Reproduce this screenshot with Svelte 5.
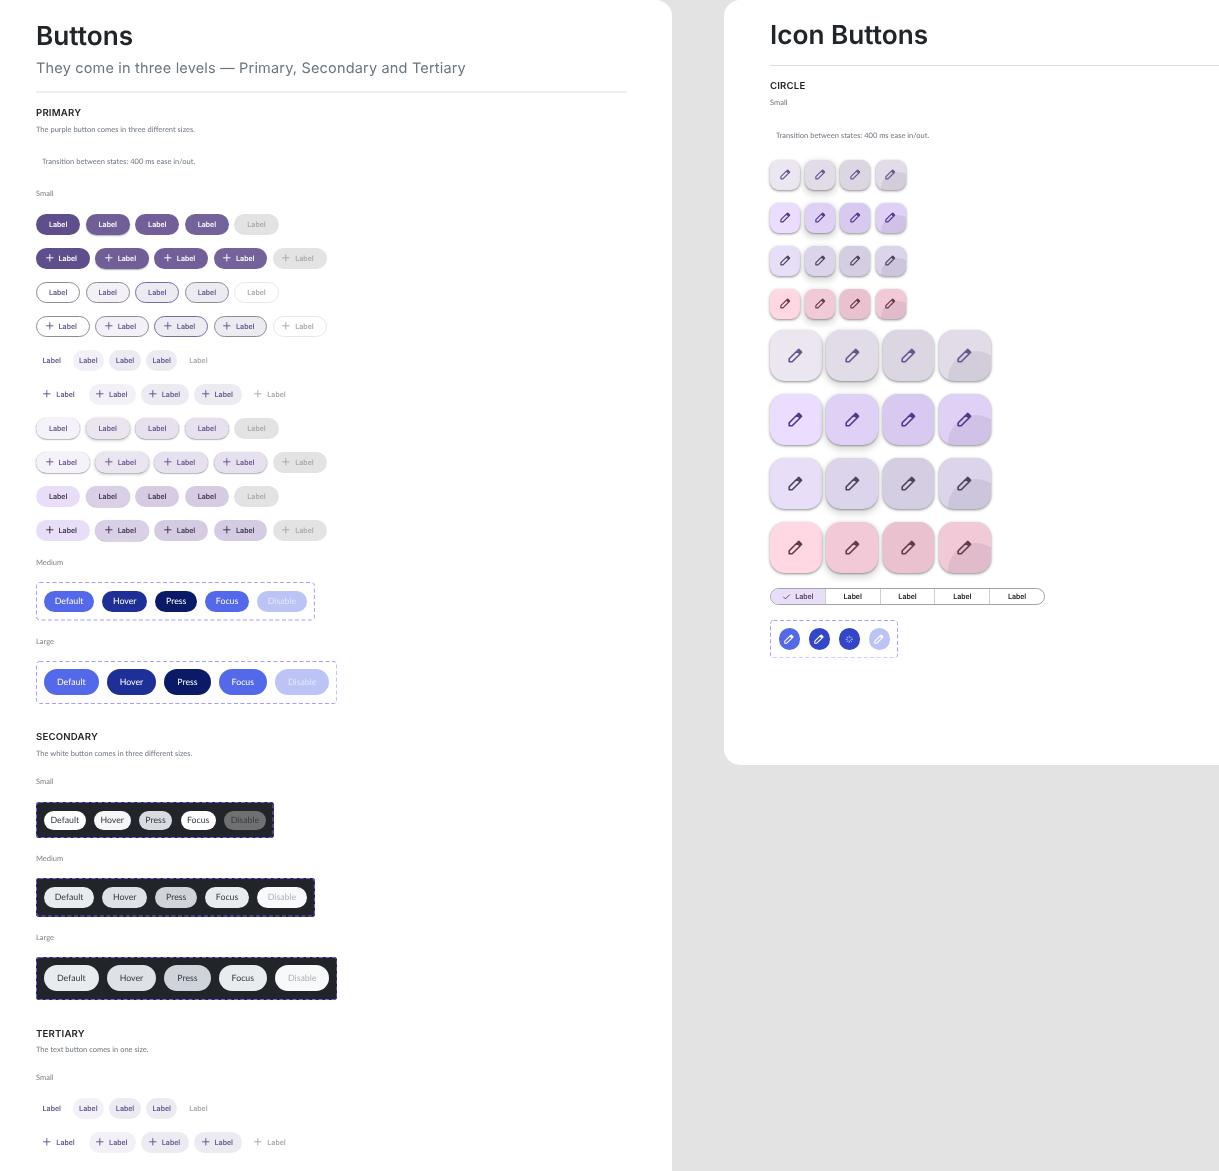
<script>
	const states = ['Default', 'Hover', 'Press', 'Focus', 'Disable'];
	const stateClass = ['default', 'hover', 'press', 'focus', 'disable'];
	const variants = ['filled', 'outlined', 'text', 'elevated', 'tonal'];
	const iconRows = ['standard', 'primary', 'secondary', 'tertiary'];
	const spokes = [0, 45, 90, 135, 180, 225, 270, 315];
</script>

{#snippet pencil()}
	<svg class="pencil" viewBox="0 0 15 15" aria-hidden="true">
		<path class="body" d="M1.2 13.8v-3L9 3l3 3-7.8 7.8z" />
		<path class="tip" d="M8.8 2.2l1.1-1.2a1.2 1.2 0 0 1 1.7 0L14 3.4a1.2 1.2 0 0 1 0 1.7l-1.2 1.1z" />
	</svg>
{/snippet}

{#snippet dashes()}
	<svg class="dashes" aria-hidden="true"><rect x="0.5" y="0.5" rx="3" /></svg>
{/snippet}

{#snippet labelRow(variant, withIcon)}
	<div class="m3-row">
		{#each stateClass as state}
			<span class="m3 {variant} {state}" class:with-icon={withIcon}>
				{#if withIcon}
					<svg class="plus" viewBox="0 0 10 10" aria-hidden="true"><path d="M5 1.2v7.6M1.2 5h7.6" /></svg>
				{/if}
				Label
			</span>
		{/each}
	</div>
{/snippet}

{#snippet variantRows(variant)}
	{@render labelRow(variant, false)}
	{@render labelRow(variant, true)}
{/snippet}

{#snippet stateBox(kind, size)}
	<div class="state-box {kind} {size}">
		{#each states as name, i}
			<span class="pill {stateClass[i]}">{name}</span>
		{/each}
		{@render dashes()}
	</div>
{/snippet}

<div class="page">
	<section class="panel buttons">
		<h1>Buttons</h1>
		<p class="lead">They come in three levels — Primary, Secondary and Tertiary</p>
		<hr class="thick" />

		<h2 class="first">PRIMARY</h2>
		<p class="note">The purple button comes in three different sizes.</p>
		<p class="note transition">Transition between states: 400 ms ease in/out.</p>
		<p class="note size">Small</p>
		<div class="m3-rows">
			{#each variants as variant}
				{@render variantRows(variant)}
			{/each}
		</div>
		<p class="note size medium-label">Medium</p>
		{@render stateBox('blue', 'md')}
		<p class="note size after-box">Large</p>
		{@render stateBox('blue', 'lg')}

		<h2>SECONDARY</h2>
		<p class="note">The white button comes in three different sizes.</p>
		<p class="note size section-size">Small</p>
		{@render stateBox('dark', 'sm')}
		<p class="note size after-box">Medium</p>
		{@render stateBox('dark', 'md')}
		<p class="note size after-box">Large</p>
		{@render stateBox('dark', 'lg')}

		<h2 class="tertiary-title">TERTIARY</h2>
		<p class="note tertiary-note">The text button comes in one size.</p>
		<p class="note size section-size">Small</p>
		<div class="m3-rows">
			{@render variantRows('text')}
		</div>
	</section>

	<section class="panel icons">
		<h1>Icon Buttons</h1>
		<hr class="thin" />
		<h2 class="first">CIRCLE</h2>
		<p class="note">Small</p>
		<p class="note transition">Transition between states: 400 ms ease in/out.</p>

		<div class="icon-grid small">
			{#each iconRows as tone}
				<div class="icon-row">
					{#each stateClass.slice(0, 4) as state}
						<span class="icon-btn {tone} {state}">{@render pencil()}</span>
					{/each}
				</div>
			{/each}
		</div>

		<div class="icon-grid large">
			{#each iconRows as tone}
				<div class="icon-row">
					{#each stateClass.slice(0, 4) as state}
						<span class="icon-btn {tone} {state}">{@render pencil()}</span>
					{/each}
				</div>
			{/each}
		</div>

		<div class="segmented">
			<span class="segment selected">
				<svg viewBox="0 0 10 10" aria-hidden="true"><path d="M1.4 5.3l2.4 2.4 5-5" /></svg>
				Label
			</span>
			{#each [1, 2, 3, 4] as n (n)}
				<span class="segment">Label</span>
			{/each}
		</div>

		<div class="circle-box">
			<span class="circle default">{@render pencil()}</span>
			<span class="circle hover">{@render pencil()}</span>
			<span class="circle hover">
				<svg class="spinner" viewBox="0 0 24 24" aria-hidden="true">
					{#each spokes as angle}
						<path d="M12 5v4" transform="rotate({angle} 12 12)" />
					{/each}
				</svg>
			</span>
			<span class="circle disable">{@render pencil()}</span>
			{@render dashes()}
		</div>
	</section>
</div>

<style>
	:global(body) {
		background: #e3e3e3;
	}

	.page {
		display: flex;
		gap: 52px;
		height: 1171px;
		overflow: hidden;
		font-family: 'Lato', sans-serif;
		text-rendering: geometricPrecision;
		will-change: transform;
	}

	.panel {
		background: #fff;
		box-sizing: border-box;
	}

	.buttons {
		width: 672px;
		flex-shrink: 0;
		padding: 20px 45px 0 36px;
		border-top-right-radius: 16px;
	}

	.icons {
		flex: 1;
		height: 765px;
		padding: 19px 0 0 46px;
		border-radius: 16px 0 0 16px;
	}

	h1 {
		margin: 0;
		font: 600 26.2px/34px 'Inter', sans-serif;
		color: #212529;
	}

	.lead {
		margin: 4px 0 -1px;
		font: 400 14.5px/22px 'Inter', sans-serif;
		letter-spacing: 0.18px;
		color: #6c757d;
	}

	hr {
		border: 0;
		margin: 0;
	}

	hr.thick {
		height: 2px;
		margin-top: 12px;
		background: #eeeeee;
	}

	hr.thin {
		height: 1px;
		margin-top: 12px;
		background: #dedede;
	}

	h2 {
		margin: 27.5px 0 0;
		font: 600 9.6px/14px 'Inter', sans-serif;
		letter-spacing: 0.2px;
		color: #212529;
	}

	h2.first {
		margin-top: 14px;
	}

	h2.tertiary-title {
		margin-top: 28.5px;
	}

	.note {
		margin: 3px 0 0;
		font: 400 7.5px/12px 'Lato', sans-serif;
		color: #6c757d;
	}

	.tertiary-note {
		margin-top: 2px;
	}

	.transition {
		margin-top: 20px;
		padding-left: 6px;
	}

	.icons .transition {
		margin-top: 21px;
	}

	.size {
		margin-top: 20px;
		color: #7b8085;
	}

	.medium-label {
		margin-top: 16px;
	}

	.after-box {
		margin-top: 15px;
	}

	.section-size {
		margin-top: 16px;
	}

	/* Material style label buttons */
	.m3-rows {
		display: flex;
		flex-direction: column;
		gap: 12.5px;
		margin-top: 13.5px;
	}

	.m3-row {
		display: flex;
		gap: 5.3px;
	}

	.m3 {
		display: inline-flex;
		align-items: center;
		justify-content: center;
		box-sizing: border-box;
		height: 21.5px;
		padding: 0 12.9px;
		gap: 4.3px;
		border-radius: 11px;
		font: 500 7.5px/1 'Roboto', sans-serif;
		letter-spacing: 0.05px;
	}

	.m3.with-icon {
		padding: 0 12.9px 0 8.6px;
	}

	.plus {
		width: 9.6px;
		height: 9.6px;
		fill: none;
		stroke: currentColor;
		stroke-width: 1;
	}

	.filled { background: #65558f; color: #fff; }
	.filled.default { background: #5f4e8c; }
	.filled.hover { background: #6f5f96; box-shadow: 0 1px 1.5px rgba(0, 0, 0, 0.3); }
	.filled.press { background: #725f99; }
	.filled.focus { background: #74639a; }

	.m3.outlined { border: 1px solid #8f8b95; color: #65558f; background: #fff; padding: 0 11.9px; }
	.m3.outlined.with-icon { padding: 0 11.9px 0 7.6px; }
	.outlined.hover { background: #f3f1f7; }
	.outlined.press { background: #ecebf2; border-color: #7a6ba3; }
	.outlined.focus { background: #ecebf2; }

	.m3.text { color: #65558f; padding: 0 6.45px; }
	.m3.text.with-icon { padding: 0 8.6px 0 6.45px; }
	.text.hover { background: #f3f1f7; }
	.text.press { background: #ecebf2; }
	.text.focus { background: #ecebf2; }

	.elevated { background: #f6f2fa; color: #65558f; box-shadow: 0 0.5px 1px rgba(0, 0, 0, 0.3), 0 0.5px 1.5px 0.5px rgba(0, 0, 0, 0.15); }
	.elevated.hover { background: #ebe5f0; box-shadow: 0 0.5px 1px rgba(0, 0, 0, 0.3), 0 1px 3px 1px rgba(0, 0, 0, 0.15); }
	.elevated.press,
	.elevated.focus { background: #e7e0ee; }

	.tonal { background: #e8def8; color: #3b3648; }
	.tonal.hover { background: #d9d0e8; box-shadow: 0 0.5px 1px rgba(0, 0, 0, 0.3); }
	.tonal.press { background: #d5cce3; }
	.tonal.focus { background: #d5cce3; }

	.m3.disable {
		color: #a9a9ab;
	}

	.filled.disable,
	.elevated.disable,
	.tonal.disable {
		background: #e3e3e3;
		box-shadow: none;
	}

	.outlined.disable {
		border-color: #e8e8e8;
		background: #fff;
	}

	/* Blue and dark state boxes */
	.state-box {
		position: relative;
		display: inline-flex;
		gap: 8px;
		box-sizing: border-box;
		align-items: center;
		margin-top: 13px;
		padding: 0 8px;
		border-radius: 3px;
		vertical-align: top;
	}

	.state-box.sm { height: 36px; margin-top: 14px; gap: 8.3px; }
	.state-box.md { height: 38.5px; }
	.state-box.lg { height: 43px; }

	.state-box.dark {
		background: #212529;
		--dash: #7b61ff;
	}

	/* figma style dashed frame, sits over the box edge */
	.dashes {
		position: absolute;
		inset: 0;
		width: 100%;
		height: 100%;
		fill: none;
		pointer-events: none;
	}

	.dashes rect {
		width: calc(100% - 1px);
		height: calc(100% - 1px);
		stroke: var(--dash, #ab9bff);
		stroke-dasharray: 4 2.5;
	}

	.pill {
		display: inline-flex;
		align-items: center;
		box-sizing: border-box;
		font: 400 8.75px/1 'Lato', sans-serif;
	}

	.sm .pill { height: 19px; padding: 0 6.5px; border-radius: 10px; }
	.md .pill { height: 21.5px; padding: 0 10.75px; border-radius: 11px; }
	.lg .pill { height: 26px; padding: 0 13px; border-radius: 13px; }

	.blue .pill { color: #fff; background: #5469ea; }
	.blue .hover { background: #1e2f97; }
	.blue .press { background: #0a1a66; }
	.blue .disable { background: #bcc3f5; color: #e4e7fb; }

	.dark .pill { color: #343a40; background: #e9ecef; }
	.dark .hover { background: #dee2e6; }
	.dark .press { background: #ced4da; }
	.dark .disable { background: #f8f9fa; color: #adb5bd; }

	.dark.sm .default,
	.dark.sm .focus { background: #fff; }
	.dark.sm .hover { background: #f4f6f8; }
	.dark.sm .press { background: #d8dce1; }
	.dark.sm .disable { background: #6f7071; color: #393c42; }

	/* Icon buttons */
	.icon-grid {
		display: flex;
		flex-direction: column;
	}

	.icon-grid.small {
		gap: 13px;
		margin-top: 17.5px;
	}

	.icon-grid.large {
		gap: 12.5px;
		margin-top: 11px;
	}

	.icon-row {
		display: flex;
	}

	.small .icon-row { gap: 5.2px; }
	.large .icon-row { gap: 4.9px; }

	.icon-btn {
		position: relative;
		display: flex;
		align-items: center;
		justify-content: center;
		overflow: hidden;
		box-shadow: 0 1px 2px rgba(0, 0, 0, 0.3), 0 1px 3px 1px rgba(0, 0, 0, 0.13);
	}

	.small .icon-btn { width: 30px; height: 30px; border-radius: 9px; }
	.large .icon-btn { width: 51.5px; height: 51.5px; border-radius: 15px; }

	.pencil {
		position: relative;
		z-index: 1;
		overflow: visible;
	}

	.pencil .body {
		fill: none;
		stroke: currentColor;
		stroke-width: 1.6;
		stroke-linejoin: round;
	}

	.pencil .tip {
		fill: currentColor;
	}

	.small .pencil { width: 10.7px; height: 10.7px; }
	.large .pencil { width: 15px; height: 15px; }

	.icon-btn.hover {
		box-shadow: 0 1px 2px rgba(0, 0, 0, 0.35), 0 3px 6px 2px rgba(0, 0, 0, 0.14);
	}

	/* ripple on the focus state */
	.icon-btn.focus::after {
		content: '';
		position: absolute;
		left: 17.5%;
		top: 41%;
		width: 109%;
		aspect-ratio: 1;
		border-radius: 50%;
		background: rgba(40, 20, 60, 0.08);
	}

	.standard { color: #65558f; }
	.standard.default { background: #ece6f0; }
	.standard.hover { background: #e1dce7; }
	.standard.press { background: #dcd6e2; }
	.standard.focus { background: #e2dce8; }

	.primary { color: #4f378a; }
	.primary.default { background: #eaddff; }
	.primary.hover { background: #dfd1f6; }
	.primary.press { background: #d7c9f0; }
	.primary.focus { background: #dfd0f6; }

	.secondary { color: #4a4459; }
	.secondary.default { background: #e8def8; }
	.secondary.hover { background: #dcd4ea; }
	.secondary.press { background: #d5cee3; }
	.secondary.focus { background: #dcd4ea; }

	.tertiary { color: #633b48; }
	.tertiary.default { background: #ffd8e4; }
	.tertiary.hover { background: #f1c9d7; }
	.tertiary.press { background: #eac2cf; }
	.tertiary.focus { background: #f1c9d7; }

	/* Segmented control */
	.segmented {
		display: flex;
		box-sizing: border-box;
		width: 275px;
		height: 17.5px;
		margin-top: 14.5px;
		border: 1px solid #a3a0a8;
		border-radius: 9px;
		overflow: hidden;
	}

	.segment {
		display: flex;
		align-items: center;
		justify-content: center;
		gap: 4px;
		flex: 1;
		font: 500 7.5px/1 'Roboto', sans-serif;
		color: #1d1b20;
		border-left: 1px solid #cfcfcf;
	}

	.segment.selected {
		border-left: 0;
		background: #e8def8;
		color: #4a4459;
	}

	.segment svg {
		width: 9px;
		height: 9px;
		fill: none;
		stroke: currentColor;
		stroke-width: 1;
	}

	/* Loader circle buttons */
	.circle-box {
		position: relative;
		display: flex;
		gap: 8.5px;
		align-items: center;
		box-sizing: border-box;
		width: 128px;
		height: 38.5px;
		margin-top: 14.5px;
		padding-left: 8.5px;
		border-radius: 3px;
	}

	.circle {
		display: flex;
		align-items: center;
		justify-content: center;
		width: 21.5px;
		height: 21.5px;
		border-radius: 50%;
		color: #fff;
	}

	.circle .pencil {
		width: 10px;
		height: 10px;
	}

	.circle.default { background: #5469ea; }
	.circle.hover { background: #3346c9; }
	.circle.disable { background: #bcc3f5; }

	.circle .spinner {
		width: 12.5px;
		height: 12.5px;
		fill: none;
		stroke: #c9d0fa;
		stroke-width: 1.6;
	}
</style>
